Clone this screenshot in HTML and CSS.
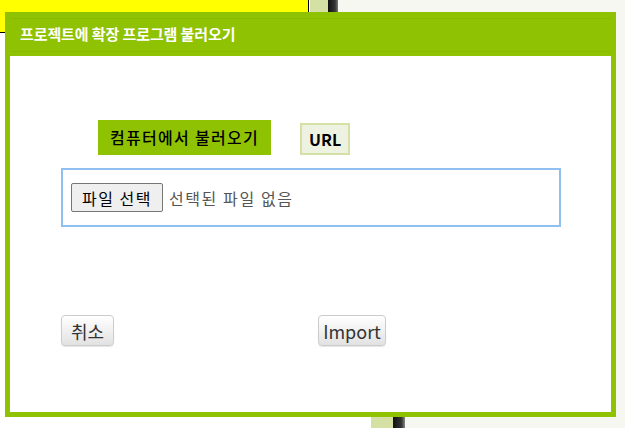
FILE: index.html
```html
<!DOCTYPE html>
<html>
	<head>
		<meta charset="UTF-8">
		<title>확장 프로그램 불러오기</title>
		<link rel="stylesheet" href="styles.css">
	</head>
	<body>
		<div class="backdrop">
			<div class="bg_yellow"></div>
			<div class="bg_strip_top"></div>
			<div class="bg_shade_top"></div>
			<div class="bg_right_top"></div>
			<div class="bg_strip_bottom"></div>
			<div class="bg_shade_bottom"></div>
			<div class="bg_right_bottom"></div>
		</div>
		<div class="dialog">
			<div class="dialog_head">
				<h2>프로젝트에 확장 프로그램 불러오기</h2>
			</div>
			<div class="dialog_body">
				<div class="tabs">
					<span class="tab active_tab">컴퓨터에서 불러오기</span>
					<span class="tab">URL</span>
				</div>
				<div class="file_box">
					<button class="file_btn">파일 선택</button>
					<span class="file_name">선택된 파일 없음</span>
				</div>
				<div class="actions">
					<button class="btn">취소</button>
					<button class="btn btn_import">Import</button>
				</div>
			</div>
		</div>
	</body>
</html>
```

FILE: styles.css
```css
html,body,div,h2,span,button{margin: 0; padding: 0;}
body{
	width: 625px;
	height: 428px;
	overflow: hidden;
	position: relative;
	background: #fff;
	font-family: "Noto Sans CJK KR", "Noto Sans", sans-serif;
}
/* 뒤 배경 */
.backdrop > div{position: absolute;}
.bg_yellow{
	left: 0; top: 0;
	width: 308px; height: 32px;
	background: #ffff00;
	border-right: 1px solid #000;
	border-bottom: 1px solid #000;
}
.bg_strip_top{left: 310px; top: 0; width: 18px; height: 200px; background: #d4e0a4;}
.bg_shade_top{left: 328px; top: 0; width: 10px; height: 200px; background: linear-gradient(to right, #111, #333 70%, #777);}
.bg_right_top{left: 338px; top: 0; right: 0; height: 200px; background: #f7f7f1;}
.bg_strip_bottom{left: 371px; top: 200px; width: 22px; bottom: 0; background: #d4e0a4;}
.bg_shade_bottom{left: 393px; top: 200px; width: 12px; bottom: 0; background: linear-gradient(to right, #111, #333 70%, #888);}
.bg_right_bottom{left: 405px; top: 200px; right: 0; bottom: 0; background: #f7f7f1;}
/* 대화상자 */
.dialog{
	position: absolute;
	left: 5px;
	top: 12px;
	width: 611px;
	height: 405px;
	box-sizing: border-box;
	border: 5px solid #8fc202;
	background: #fff;
	display: flex;
	flex-direction: column;
}
.dialog_head{
	height: 39px;
	box-sizing: border-box;
	background: #8fc202;
	padding-top: 1px;
}
.dialog_head h2{
	height: 34px;
	box-sizing: border-box;
	border-top: 1px solid #88ba00;
	border-bottom: 1px solid #88ba00;
	padding-left: 10px;
	font-size: 15px;
	line-height: 30px;
	letter-spacing: -0.1px;
	font-weight: bold;
	color: #fff;
}
.dialog_body{
	flex: 1;
	padding: 64px 0 0 56px;
}
.tabs{
	display: flex;
	align-items: flex-end;
	gap: 29px;
	margin-left: 32px;
}
.tab{
	height: 28px;
	line-height: 28px;
	padding: 0 7px;
	font-size: 16px;
	font-weight: bold;
	color: #000;
	background: #eef2e0;
	border: 2px solid #d4e0a4;
}
.active_tab{
	height: 35px;
	line-height: 35px;
	padding: 0 12px;
	background: #8fc202;
	border: none;
	font-weight: 500;
	letter-spacing: 1.3px;
}
.file_box{
	width: 500px;
	height: 59px;
	box-sizing: border-box;
	margin-top: 13px;
	margin-left: -5px;
	border: 2px solid #90c0ef;
	display: flex;
	align-items: center;
	padding-left: 8px;
}
.file_btn{
	height: 29px;
	padding: 0 10px;
	font-family: "Noto Sans CJK KR", sans-serif;
	font-size: 16px;
	letter-spacing: 1.5px;
	color: #000;
	background: #efefef;
	border: 1px solid #767676;
	border-radius: 2px;
}
.file_name{
	margin-left: 6px;
	font-size: 16px;
	letter-spacing: 1.6px;
	color: #555;
}
.actions{
	display: flex;
	gap: 204px;
	margin-top: 88px;
	margin-left: -5px;
}
.btn{
	height: 31px;
	padding: 0 9px;
	font-family: "Noto Sans CJK KR", "Noto Sans", sans-serif;
	font-size: 18px;
	color: #333;
	background: linear-gradient(#fff, #e2e2e2);
	border: 1px solid #ccc;
	border-radius: 4px;
	box-shadow: 0 1px 1px rgba(0,0,0,0.1);
}
.btn_import{
	padding: 0 4px;
}
```
